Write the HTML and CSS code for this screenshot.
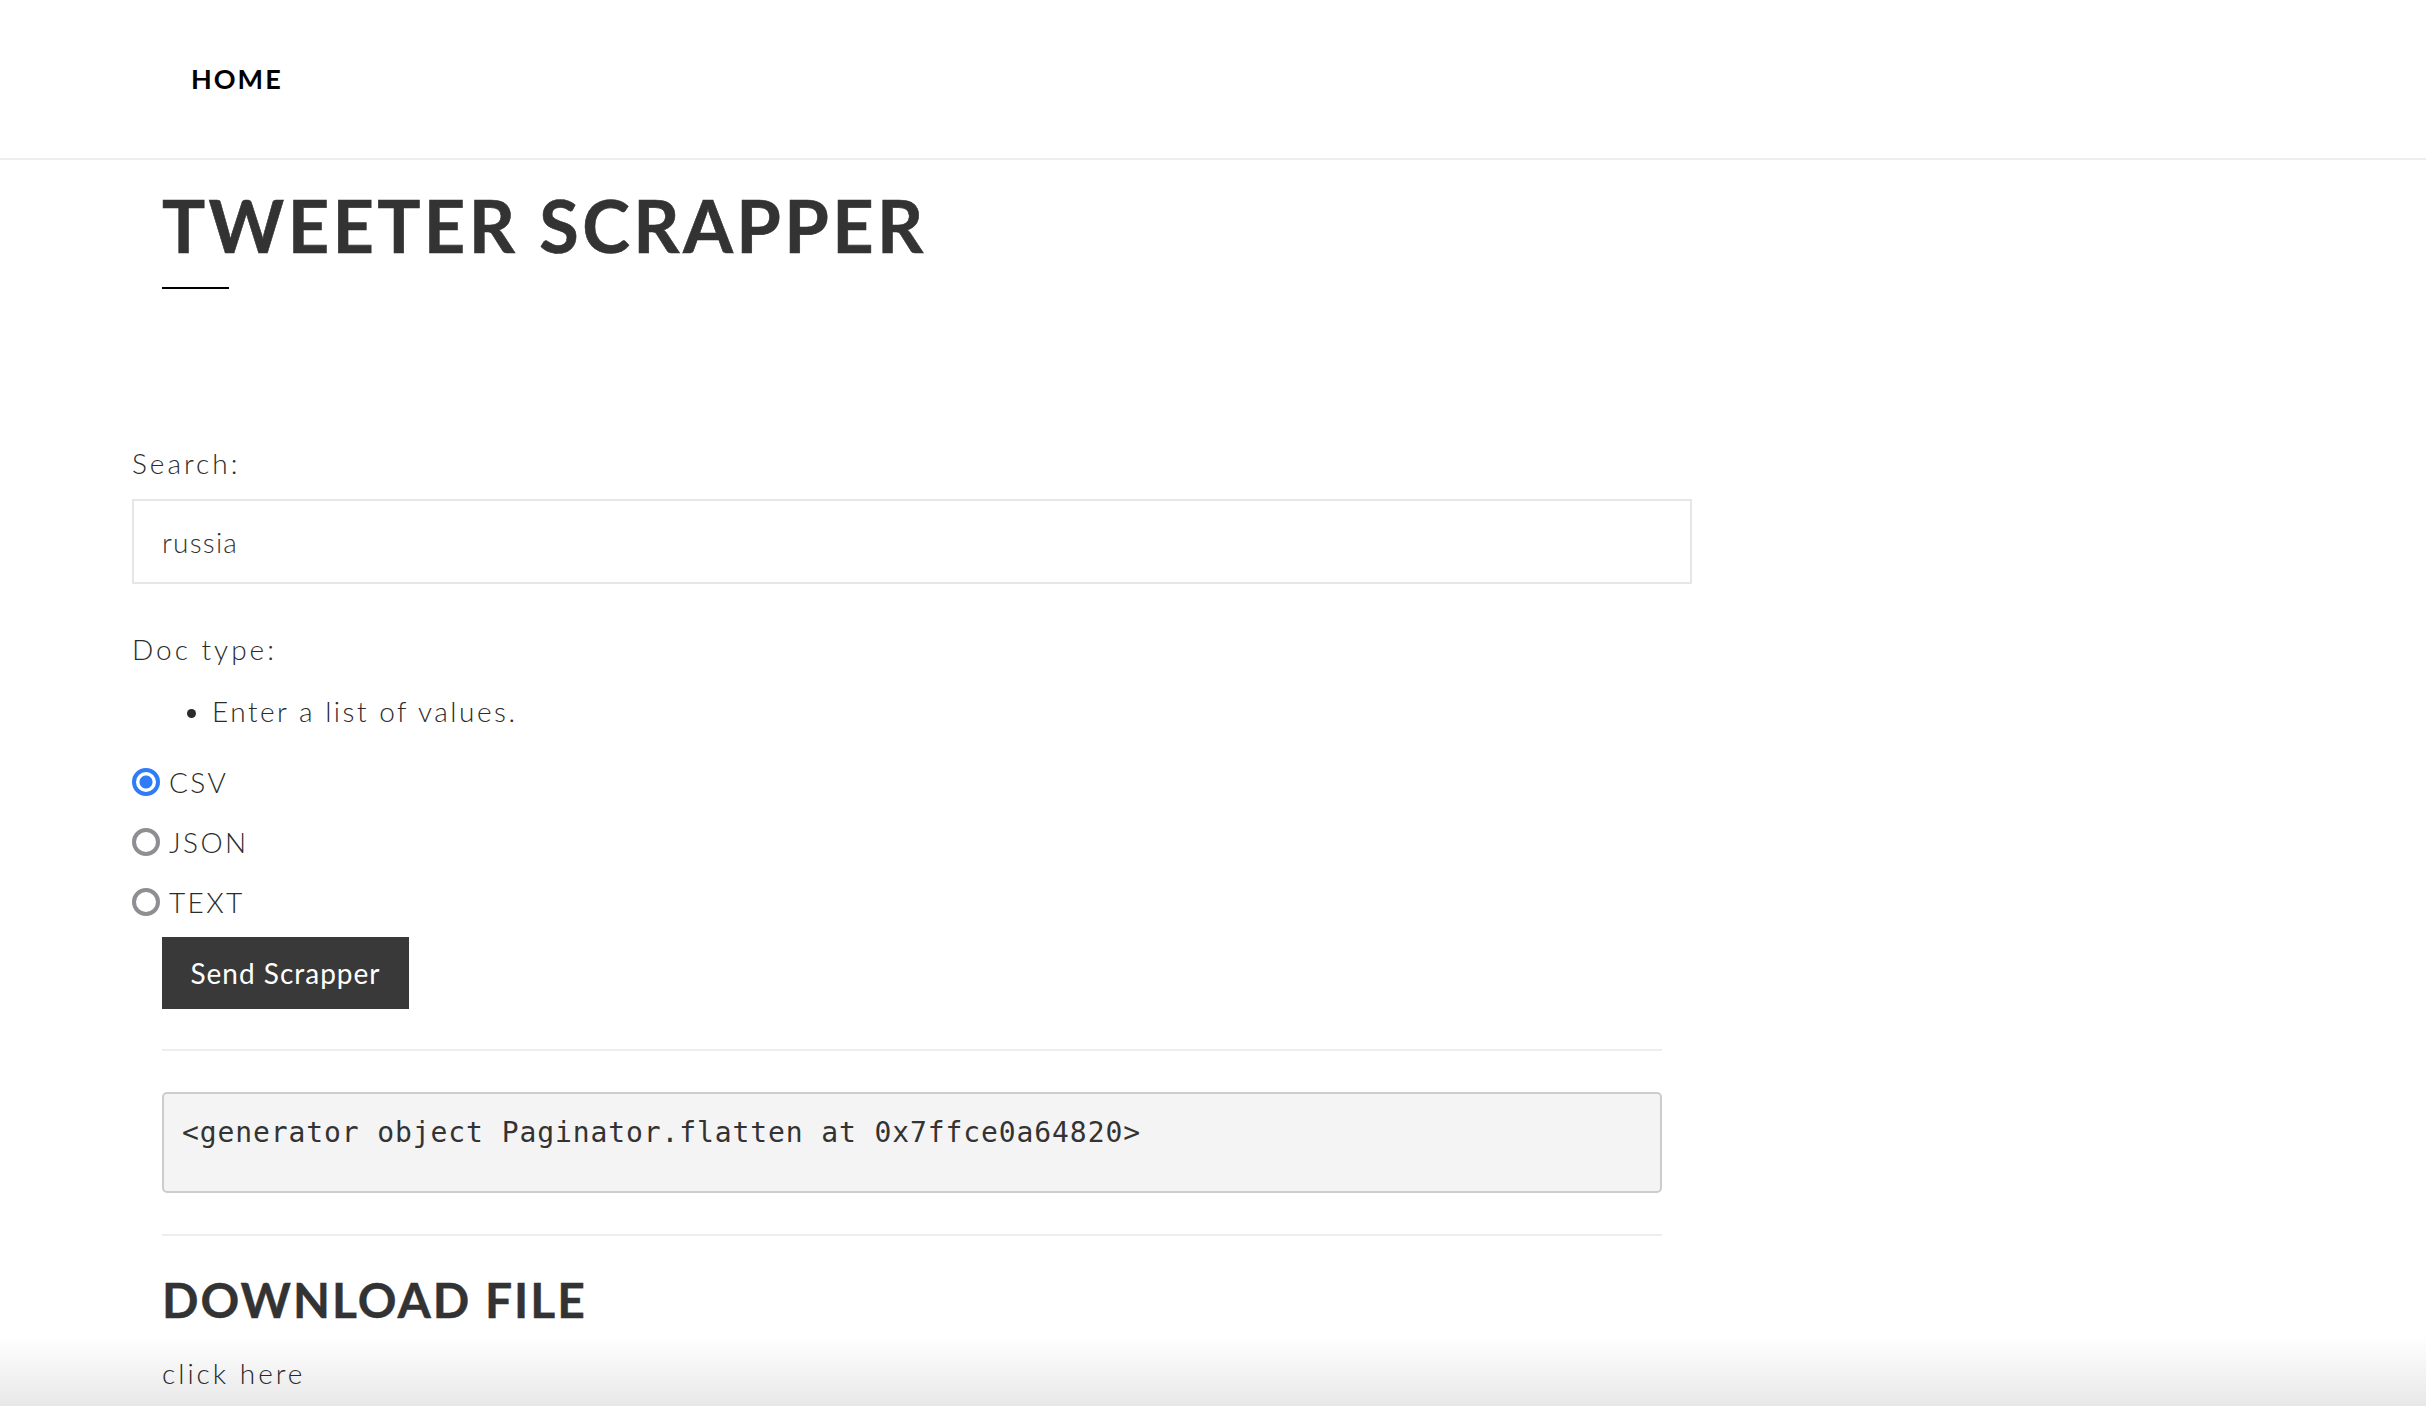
FILE: index.html
```html
<!DOCTYPE html>
<html lang="en">
<head>
<meta charset="utf-8">
<title>Tweeter Scrapper</title>
<link rel="stylesheet" href="styles.css">
</head>
<body>
<header class="topbar">
  <nav class="nav"><a class="nav-link" href="#">HOME</a></nav>
</header>
<main class="page">
  <section class="title-block">
    <h1 class="title">TWEETER SCRAPPER</h1>
    <div class="title-rule"></div>
  </section>
  <form class="form">
    <label class="field-label" for="search">Search:</label>
    <input class="text-input" id="search" type="text" value="russia">
    <div class="field-label doc-label">Doc type:</div>
    <ul class="help-list"><li>Enter a list of values.</li></ul>
    <div class="radios">
      <label class="radio-row"><input class="radio" type="radio" name="doc" checked><span>CSV</span></label>
      <label class="radio-row"><input class="radio" type="radio" name="doc"><span>JSON</span></label>
      <label class="radio-row"><input class="radio" type="radio" name="doc"><span>TEXT</span></label>
    </div>
    <button class="btn" type="button">Send Scrapper</button>
  </form>
  <section class="results">
    <hr class="rule">
    <pre class="output">&lt;generator object Paginator.flatten at 0x7ffce0a64820&gt;</pre>
    <hr class="rule">
    <h2 class="subtitle">DOWNLOAD FILE</h2>
    <a class="link" href="#">click here</a>
  </section>
</main>
<div class="bottom-shade"></div>
</body>
</html>
```
FILE: styles.css
```css
html, body {
  margin: 0;
  padding: 0;
  background: #fff;
}
body {
  font-family: "Lato", "Open Sans", sans-serif;
  font-weight: 300;
  color: #2b2b2b;
  font-size: 28px;
}
.topbar {
  height: 158px;
  border-bottom: 2px solid #eeeeee;
  display: flex;
  align-items: center;
}
.nav {
  padding-left: 191px;
  padding-bottom: 2px;
}
.nav-link {
  font-family: "Lato", sans-serif;
  font-weight: 700;
  font-size: 27px;
  letter-spacing: 2px;
  color: #000;
  text-decoration: none;
  line-height: 1;
}
.page {
  padding-left: 132px;
}
.title-block {
  padding-left: 30px;
  padding-top: 29px;
}
.title {
  margin: 0;
  font-family: "Lato", sans-serif;
  font-weight: 700;
  font-size: 72px;
  line-height: 1;
  letter-spacing: 3.4px;
  color: #333;
  -webkit-text-stroke: 0.6px #333;
}
.title-rule {
  margin-top: 26px;
  width: 67px;
  height: 2px;
  background: #000;
}
.form {
  display: flex;
  flex-direction: column;
  align-items: flex-start;
  padding-top: 153px;
}
.field-label {
  font-size: 28px;
  line-height: 42px;
  letter-spacing: 3px;
}
.text-input {
  margin-top: 15px;
  box-sizing: border-box;
  width: 1560px;
  height: 85px;
  border: 2px solid #e6e6e6;
  padding: 0 28px;
  font-family: "Lato", sans-serif;
  font-weight: 300;
  font-size: 28px;
  letter-spacing: 1.2px;
  color: #333;
  outline: none;
  background: #fff;
}
.doc-label {
  margin-top: 44px;
}
.help-list {
  margin: 20px 0 0 0;
  padding-left: 80px;
  font-size: 28px;
  line-height: 42px;
  letter-spacing: 2.5px;
}
.radios {
  margin-top: 30px;
  display: flex;
  flex-direction: column;
  gap: 20px;
}
.radio-row {
  height: 40px;
  display: flex;
  align-items: center;
  gap: 9px;
  font-size: 28px;
  letter-spacing: 2.4px;
}
.radio {
  -webkit-appearance: none;
  appearance: none;
  margin: 0;
  box-sizing: border-box;
  width: 28px;
  height: 28px;
  border-radius: 50%;
  border: 4px solid #8e8e93;
  background: #fff;
}
.radio:checked {
  border-color: #2f7cf6;
  background: radial-gradient(circle, #2f7cf6 0 6px, #fff 7px);
}
.btn {
  margin-top: 15px;
  margin-left: 30px;
  width: 247px;
  height: 72px;
  border: 0;
  border-radius: 0;
  padding: 0;
  background: #393939;
  color: #fff;
  font-family: "Lato", sans-serif;
  font-weight: 400;
  font-size: 28px;
  letter-spacing: 1px;
}
.results {
  padding-left: 30px;
  width: 1500px;
  padding-top: 40px;
}
.rule {
  margin: 0;
  border: 0;
  height: 2px;
  background: #eeeeee;
}
.output {
  margin: 41px 0;
  border: 2px solid #cccccc;
  border-radius: 5px;
  background: #f4f4f4;
  padding: 22px 18px 42px;
  font-family: "DejaVu Sans Mono", monospace;
  font-size: 28px;
  letter-spacing: 0.9px;
  color: #333;
  line-height: normal;
}
.subtitle {
  margin: 40px 0 0 0;
  font-family: "Lato", sans-serif;
  font-weight: 700;
  font-size: 48px;
  line-height: 1;
  letter-spacing: 2px;
  color: #333;
  -webkit-text-stroke: 0.4px #333;
}
.link {
  display: block;
  margin-top: 28px;
  font-size: 28px;
  line-height: 42px;
  letter-spacing: 3px;
  color: #2b2b2b;
  text-decoration: none;
}
.bottom-shade {
  position: fixed;
  left: 0;
  right: 0;
  bottom: 0;
  height: 70px;
  background: linear-gradient(to bottom, rgba(0,0,0,0), rgba(0,0,0,0.09));
  pointer-events: none;
}
```
